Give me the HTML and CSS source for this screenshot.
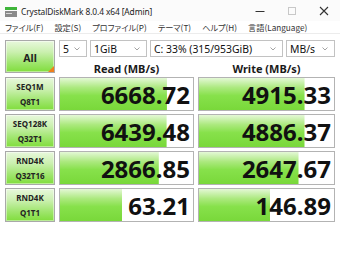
FILE: index.html
```html
<!DOCTYPE html>
<html lang="ja">
    <head>
        <meta charset="UTF-8">
        <title>CrystalDiskMark 8.0.4 x64 [Admin]</title>
        <link rel="stylesheet" href="styles.css">
    </head>
    <body>
        <div class="titlebar">
            <svg class="app-icon" width="12" height="10" viewBox="0 0 12 10">
                <rect x="0" y="0" width="12" height="3" fill="#3fb53a"/>
                <rect x="0" y="4" width="12" height="6" fill="#8a8a8a"/>
                <rect x="1" y="6" width="6" height="1" fill="#d8d8d8"/>
            </svg>
            <span class="title">CrystalDiskMark 8.0.4 x64 [Admin]</span>
            <div class="controls">
                <span class="ctl">
                    <svg width="10" height="10" viewBox="0 0 10 10"><line x1="0.5" y1="5.5" x2="9.5" y2="5.5" stroke="#333" stroke-width="1"/></svg>
                </span>
                <span class="ctl">
                    <svg width="10" height="10" viewBox="0 0 10 10"><rect x="1.5" y="1.5" width="7" height="7" fill="none" stroke="#c8c8c8" stroke-width="1"/></svg>
                </span>
                <span class="ctl">
                    <svg width="10" height="10" viewBox="0 0 10 10"><path d="M1 1 L9 9 M9 1 L1 9" stroke="#333" stroke-width="1.1"/></svg>
                </span>
            </div>
        </div>

        <div class="menubar">
            <span class="menu-item">ファイル(F)</span>
            <span class="menu-item">設定(S)</span>
            <span class="menu-item">プロファイル(P)</span>
            <span class="menu-item">テーマ(T)</span>
            <span class="menu-item">ヘルプ(H)</span>
            <span class="menu-item">言語(Language)</span>
        </div>

        <div class="bench">
            <div class="btn btn-all">All<span class="corner"></span></div>

            <div class="combos">
                <div class="combo combo-count"><span>5</span><svg class="chev" width="6" height="4" viewBox="0 0 6 4"><path d="M0.5 0.5 L3 3 L5.5 0.5" fill="none" stroke="#999" stroke-width="0.9"/></svg></div>
                <div class="combo combo-size"><span>1GiB</span><svg class="chev" width="6" height="4" viewBox="0 0 6 4"><path d="M0.5 0.5 L3 3 L5.5 0.5" fill="none" stroke="#999" stroke-width="0.9"/></svg></div>
                <div class="combo combo-drive"><span>C: 33% (315/953GiB)</span><svg class="chev" width="6" height="4" viewBox="0 0 6 4"><path d="M0.5 0.5 L3 3 L5.5 0.5" fill="none" stroke="#999" stroke-width="0.9"/></svg></div>
                <div class="combo combo-unit"><span>MB/s</span><svg class="chev" width="6" height="4" viewBox="0 0 6 4"><path d="M0.5 0.5 L3 3 L5.5 0.5" fill="none" stroke="#999" stroke-width="0.9"/></svg></div>
            </div>

            <div class="head">Read (MB/s)</div>
            <div class="head">Write (MB/s)</div>

            <!-- bar width = log10(score * 10) / 6 -->
            <div class="btn btn-test"><span>SEQ1M</span><span>Q8T1</span></div>
            <div class="meter" style="--w: 80.4%">6668.72</div>
            <div class="meter" style="--w: 78.19%">4915.33</div>

            <div class="btn btn-test"><span>SEQ128K</span><span>Q32T1</span></div>
            <div class="meter" style="--w: 80.15%">6439.48</div>
            <div class="meter" style="--w: 78.15%">4886.37</div>

            <div class="btn btn-test"><span>RND4K</span><span>Q32T16</span></div>
            <div class="meter" style="--w: 74.29%">2866.85</div>
            <div class="meter" style="--w: 73.72%">2647.67</div>

            <div class="btn btn-test"><span>RND4K</span><span>Q1T1</span></div>
            <div class="meter" style="--w: 46.68%">63.21</div>
            <div class="meter" style="--w: 52.78%">146.89</div>
        </div>
    </body>
</html>
```

FILE: styles.css
```css
body {
    margin: 0;
    width: 340px;
    height: 275px;
    overflow: hidden;
    background: #fff;
    font-family: "Noto Sans", "Noto Sans CJK JP", sans-serif;
    color: #1a1a1a;
}

/* window chrome */
.titlebar {
    display: flex;
    align-items: center;
    height: 21px;
    padding-top: 1px;
    box-sizing: border-box;
    background: #fbfbfb;
}

.app-icon {
    margin: 2px 4px 0 5px;
}

.title {
    font-size: 8.4px;
    letter-spacing: -0.1px;
    color: #222;
}

.controls {
    display: flex;
    margin-left: auto;
}

.ctl {
    display: flex;
    justify-content: center;
    align-items: center;
    width: 32px;
    height: 18px;
}

.menubar {
    display: flex;
    gap: 11px;
    height: 12px;
    padding-left: 5px;
    border-bottom: 1px solid #ececec;
    font-family: "Noto Sans CJK JP", sans-serif;
    font-feature-settings: "palt";
    font-size: 8.2px;
    line-height: 12px;
    color: #333;
}

/* benchmark table */
.bench {
    display: grid;
    grid-template-columns: 50px 135px 137px;
    grid-template-rows: 17px 14px repeat(4, 34px);
    column-gap: 4px;
    row-gap: 3px;
    padding: 6px 5px 0 5px;
}

.btn {
    position: relative;
    box-sizing: border-box;
    border: 1px solid #a9a9a9;
    background: linear-gradient(#e8f8dc 0%, #cbf0b0 35%, #a2e672 68%, #80dd3c 100%);
    box-shadow: inset 0 0 0 1px rgba(255, 255, 255, 0.45);
    font-weight: 700;
    color: #222;
}

.btn-all {
    grid-row: 1 / 3;
    height: 33px;
    display: flex;
    justify-content: center;
    align-items: center;
    padding-top: 3px;
    font-size: 10.5px;
}

.corner {
    position: absolute;
    right: 0;
    bottom: 0;
    width: 0;
    height: 0;
    border-left: 6px solid transparent;
    border-bottom: 6px solid #f0801c;
}

.btn-test {
    display: flex;
    flex-direction: column;
    justify-content: center;
    align-items: center;
    font-size: 8px;
    line-height: 15px;
}

.combos {
    grid-column: 2 / 4;
    display: flex;
    gap: 3px;
}

.combo {
    display: flex;
    align-items: center;
    justify-content: space-between;
    box-sizing: border-box;
    height: 17px;
    padding: 0 6px 0 3px;
    border: 1px solid #c2c2c2;
    background: #fff;
    font-size: 10.4px;
    color: #111;
}

.combo-count { width: 28px; }
.combo-size { width: 57px; }
.combo-drive { width: 133px; }
.combo-unit { width: 49px; }

.chev {
    flex: none;
}

.head {
    display: flex;
    justify-content: center;
    align-items: center;
    padding-top: 2px;
    font-size: 11px;
    font-weight: 700;
    color: #1a1a1a;
}

.meter {
    box-sizing: border-box;
    border: 1px solid #b3b3b3;
    background-color: #fff;
    background-image: linear-gradient(#e4f8d6 0%, #ace97f 30%, #87e14b 55%, #79d83a 100%);
    background-repeat: no-repeat;
    background-size: var(--w) 100%;
    text-align: right;
    padding: 2px 3px 0 0;
    font-size: 24px;
    font-weight: 700;
    line-height: 30px;
    color: #111;
}
```
